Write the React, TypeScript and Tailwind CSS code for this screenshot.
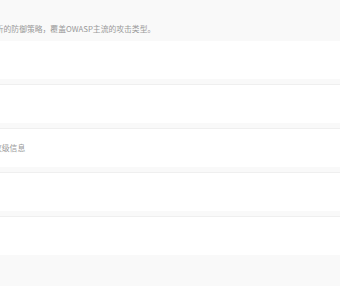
const font = { fontFamily: '"Noto Sans CJK SC", "Noto Sans", sans-serif' };

const Card: React.FC<{ first?: boolean; children?: React.ReactNode }> = ({ first, children }) => {
  return (
    <div
      className={
        first
          ? "h-[38px] bg-white flex items-center"
          : "mt-[5px] h-[39px] bg-white border-t border-[#efefef] flex items-center"
      }
    >
      {children}
    </div>
  );
};

export default function App() {
  return (
    <div className="w-[340px] h-[286px] overflow-hidden bg-[#f9f9f9]" style={font}>
      <div className="h-[41px] flex items-start pt-[23px]">
        <div className="-ml-[51px] whitespace-nowrap text-[7.8px] leading-[12px] text-[#999999]">
          基于多维度分析的防御策略，覆盖OWASP主流的攻击类型。
        </div>
      </div>
      <Card first />
      <Card />
      <Card>
        <div className="-ml-[6px] whitespace-nowrap text-[7.8px] leading-[12px] text-[#999999]">
          攻级信息
        </div>
      </Card>
      <Card />
      <Card />
    </div>
  );
}
